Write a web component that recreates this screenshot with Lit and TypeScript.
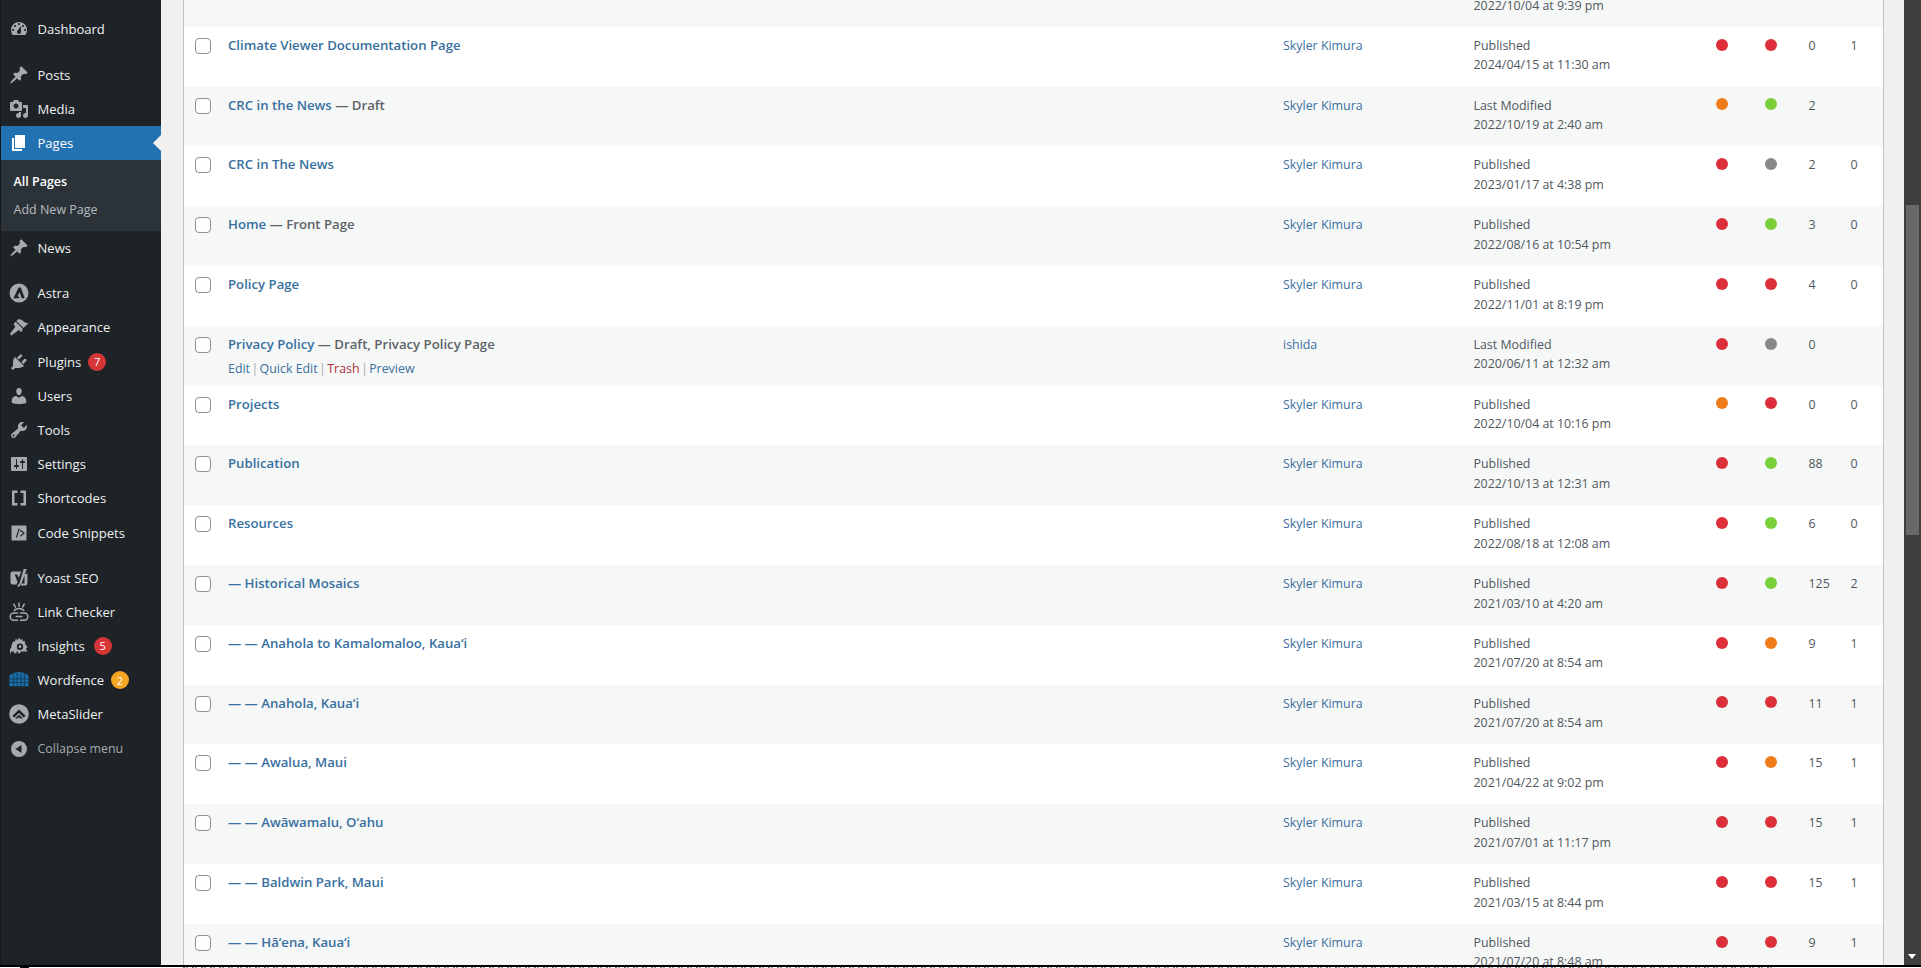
import { LitElement, html, css, svg } from "lit";
import { customElement } from "lit/decorators.js";

type Dot = "r" | "o" | "g" | "x";
interface Row { t: string; s?: string; a?: string; st?: string; d: string; d1?: Dot; d2?: Dot; n1?: string; n2?: string; actions?: boolean; }

const rows: Row[] = [
  { t: "", st: "Published", d: "2022/10/04 at 9:39 pm", a: "" },
  { t: "Climate Viewer Documentation Page", d: "2024/04/15 at 11:30 am", d1: "r", d2: "r", n1: "0", n2: "1" },
  { t: "CRC in the News", s: " — Draft", st: "Last Modified", d: "2022/10/19 at 2:40 am", d1: "o", d2: "g", n1: "2" },
  { t: "CRC in The News", d: "2023/01/17 at 4:38 pm", d1: "r", d2: "x", n1: "2", n2: "0" },
  { t: "Home", s: " — Front Page", d: "2022/08/16 at 10:54 pm", d1: "r", d2: "g", n1: "3", n2: "0" },
  { t: "Policy Page", d: "2022/11/01 at 8:19 pm", d1: "r", d2: "r", n1: "4", n2: "0" },
  { t: "Privacy Policy", s: " — Draft, Privacy Policy Page", a: "ishida", st: "Last Modified", d: "2020/06/11 at 12:32 am", d1: "r", d2: "x", n1: "0", actions: true },
  { t: "Projects", d: "2022/10/04 at 10:16 pm", d1: "o", d2: "r", n1: "0", n2: "0" },
  { t: "Publication", d: "2022/10/13 at 12:31 am", d1: "r", d2: "g", n1: "88", n2: "0" },
  { t: "Resources", d: "2022/08/18 at 12:08 am", d1: "r", d2: "g", n1: "6", n2: "0" },
  { t: "— Historical Mosaics", d: "2021/03/10 at 4:20 am", d1: "r", d2: "g", n1: "125", n2: "2" },
  { t: "— — Anahola to Kamalomaloo, Kaua‘i", d: "2021/07/20 at 8:54 am", d1: "r", d2: "o", n1: "9", n2: "1" },
  { t: "— — Anahola, Kaua‘i", d: "2021/07/20 at 8:54 am", d1: "r", d2: "r", n1: "11", n2: "1" },
  { t: "— — Awalua, Maui", d: "2021/04/22 at 9:02 pm", d1: "r", d2: "o", n1: "15", n2: "1" },
  { t: "— — Awāwamalu, O‘ahu", d: "2021/07/01 at 11:17 pm", d1: "r", d2: "r", n1: "15", n2: "1" },
  { t: "— — Baldwin Park, Maui", d: "2021/03/15 at 8:44 pm", d1: "r", d2: "r", n1: "15", n2: "1" },
  { t: "— — Hā‘ena, Kaua‘i", d: "2021/07/20 at 8:48 am", d1: "r", d2: "r", n1: "9", n2: "1" },
];

const p = (d: string) => svg`<path fill-rule="evenodd" d=${d}></path>`;
const icons: Record<string, unknown> = {
  dashboard: p("M3.76 16h12.48c1.1-1.37 1.76-3.11 1.76-5 0-4.42-3.58-8-8-8s-8 3.58-8 8c0 1.89.66 3.63 1.76 5zM10 4c.55 0 1 .45 1 1s-.45 1-1 1-1-.45-1-1 .45-1 1-1zM6 6c.55 0 1 .45 1 1s-.45 1-1 1-1-.45-1-1 .45-1 1-1zm8 0c.55 0 1 .45 1 1s-.45 1-1 1-1-.45-1-1 .45-1 1-1zm-5.37 5.55L12 7v6c0 1.1-.9 2-2 2s-2-.9-2-2c0-.57.24-1.08.63-1.45zM4 10c.55 0 1 .45 1 1s-.45 1-1 1-1-.45-1-1 .45-1 1-1zm12 0c.55 0 1 .45 1 1s-.45 1-1 1-1-.45-1-1 .45-1 1-1z"),
  pin: p("M10.44 3.02l1.82-1.82 6.36 6.35-1.83 1.82c-1.05-.68-2.48-.57-3.41.36l-.75.75c-.92.93-1.04 2.35-.35 3.41l-1.83 1.82-2.41-2.41-2.8 2.79c-.42.42-3.38 2.71-3.8 2.29s1.86-3.39 2.28-3.81l2.79-2.79L4.1 9.36l1.83-1.82c1.05.69 2.48.57 3.4-.36l.75-.75c.93-.92 1.05-2.35.36-3.41z"),
  media: p("M13 11V4c0-.55-.45-1-1-1h-1.67L9 1H5L3.67 3H2c-.55 0-1 .45-1 1v7c0 .55.45 1 1 1h10c.55 0 1-.45 1-1zM7 4.5c1.38 0 2.5 1.12 2.5 2.5S8.38 9.5 7 9.5 4.5 8.38 4.5 7 5.62 4.5 7 4.5zM14 6h5v10.5c0 1.38-1.12 2.5-2.5 2.5S14 17.88 14 16.5s1.12-2.5 2.5-2.5c.17 0 .34.02.5.05V9h-3V6zm-4 8.05V13h2v3.5c0 1.38-1.12 2.5-2.5 2.5S7 17.88 7 16.5 8.12 14 9.5 14c.17 0 .34.02.5.05z"),
  page: p("M6 15V2h10v13H6zm-1 1h8v2H3V5h2v11z"),
  astra: p("M10 .5a9.5 9.5 0 1 0 0 19 9.5 9.5 0 0 0 0-19zM9.6 4.5h2.2l3.9 10.7h-2.9l-2.1-6-3.4 6H4.4zM8.6 12.2l-1.2 3h3.4z"),
  appearance: p("M14.48 11.06L7.41 3.99l1.5-1.5c.5-.56 2.3-.47 3.51.32 1.21.8 1.43 1.28 2.91 2.1 1.18.64 2.45 1.26 4.45.85zm-.71.71L6.7 4.7 4.93 6.47c-.39.39-.39 1.02 0 1.41l1.06 1.06c.39.39.39 1.03 0 1.42-.6.6-4.4 6.03-5.03 6.66l1.5 1.5c.62-.63 6.06-4.43 6.66-5.03.39-.39 1.03-.39 1.42 0l1.06 1.06c.39.39 1.02.39 1.41 0z"),
  plugins: p("M13.11 4.36L9.87 7.6 8 5.73l3.24-3.24c.35-.34 1.05-.2 1.56.32.52.51.66 1.21.31 1.55zm-8 1.77l.91-1.12 9.01 9.01-1.19.84c-.71.71-2.63 1.16-3.82 1.16H6.14L4.9 17.26c-.59.59-1.54.59-2.12 0-.59-.58-.59-1.53 0-2.12l1.24-1.24v-3.88c0-1.13.4-3.01 1.09-3.89zm7.26 3.97l3.24-3.24c.34-.35 1.04-.21 1.55.31.52.51.66 1.21.31 1.55l-3.24 3.25z"),
  users: p("M10 9.25c-2.27 0-2.73-3.44-2.73-3.44C7 4.02 7.82 2 9.97 2c2.16 0 2.98 2.02 2.71 3.81 0 0-.41 3.44-2.68 3.44zm0 2.57L12.72 10c2.39 0 4.52 2.33 4.52 4.53v2.49s-3.65 1.13-7.24 1.13c-3.65 0-7.24-1.13-7.24-1.13v-2.49c0-2.25 1.94-4.48 4.47-4.48z"),
  tools: p("M16.68 9.77c-1.34 1.34-3.3 1.67-4.95.99l-5.41 6.52c-.99.99-2.59.99-3.58 0s-.99-2.59 0-3.57l6.52-5.42c-.68-1.65-.35-3.61.99-4.95 1.28-1.28 3.12-1.62 4.72-1.06l-2.89 2.89 2.82 2.82 2.86-2.87c.53 1.58.18 3.39-1.08 4.65zM3.81 16.21c.4.39 1.04.39 1.43 0 .4-.4.4-1.04 0-1.43-.39-.4-1.03-.4-1.43 0-.39.39-.39 1.03 0 1.43z"),
  settings: p("M18 16V4c0-.55-.45-1-1-1H3c-.55 0-1 .45-1 1v12c0 .55.45 1 1 1h14c.55 0 1-.45 1-1zM8 11h1c.55 0 1 .45 1 1s-.45 1-1 1H8v1.5c0 .28-.22.5-.5.5s-.5-.22-.5-.5V13H6c-.55 0-1-.45-1-1s.45-1 1-1h1V5.5c0-.28.22-.5.5-.5s.5.22.5.5V11zm5-2h-1c-.55 0-1-.45-1-1s.45-1 1-1h1V5.5c0-.28.22-.5.5-.5s.5.22.5.5V7h1c.55 0 1 .45 1 1s-.45 1-1 1h-1v5.5c0 .28-.22.5-.5.5s-.5-.22-.5-.5V9z"),
  shortcodes: p("M3 2.5h5.5V5H5.5v10h3v2.5H3zM17 2.5h-5.5V5h3v10h-3v2.5H17z"),
  snippets: p("M3.5 2.5h13a1 1 0 0 1 1 1v13a1 1 0 0 1-1 1h-13a1 1 0 0 1-1-1v-13a1 1 0 0 1 1-1zM9.6 5.5l-2.7 9h1.2l2.7-9zM11.3 6.6v1.6l3 2-3 2v1.6l4.6-3.6z"),
  yoast: p("M3.5 3.5h8.7L9.8 9.9 8.3 6.5H5.7l2.9 7.2-1 2.8H3.5a2 2 0 0 1-2-2V5.5a2 2 0 0 1 2-2zM14.7 1h3l-5.1 14.2c-.8 2.2-2 3.3-4 3.8v-2c1-.3 1.6-1 2-2.2l.2-.5zM15.5 6.2l2.9-.6v9.9a2 2 0 0 1-2 2H11l.8-2.1h3.7z"),
  insights: p("M3 8l1.6-3.2.9 1.4L7 2.6l1.3 1.9L10 1.5l1.6 2.6 1.7-1.4.5 2.5 2.3-.2-.2 2.6 2.6 3.4-1.6 2 1.6 2.4H2.3l-.9 3.2-.6-5.4L2 12zM11 7.5a3.2 3.2 0 1 0 0 6.4 3.2 3.2 0 0 0 0-6.4zM11 9.3a1.4 1.4 0 1 1 0 2.8 1.4 1.4 0 0 1 0-2.8zM5 15.5v1.8h2.4v-1.8zM9 15.5v1.8h2.4v-1.8z"),
  meta: p("M10 .2a9.8 9.8 0 1 0 0 19.6 9.8 9.8 0 0 0 0-19.6zM10 5.4l6.6 6.4-1.9 1.8-4.7-4.5-4.7 4.5-1.9-1.8zM10 10.8l4 3.8h-2.5L10 13.2l-1.5 1.4H6z"),
  collapse: p("M10 2a8 8 0 1 0 0 16 8 8 0 0 0 0-16zM12.5 6v8l-6-4z"),
};

const linkIcon = svg`<g fill="none" stroke="#a7aaad" stroke-width="1.5" stroke-linecap="round">
  <path d="M10 1v3.5M4.8 2.2l1.6 3M15.2 2.2l-1.6 3"></path>
  <path d="M8.5 11H4.8a3.6 3.6 0 0 0 0 7.2h3.7M11.5 11h3.7a3.6 3.6 0 0 1 0 7.2h-3.7"></path>
  <path d="M5.2 8.5c1-1.2 2.6-1.9 4.8-1.9s3.8.7 4.8 1.9M7.2 14.6h5.6"></path>
</g>`;
const fenceIcon = svg`<path fill="#1d6ca5" d="M.5 5.5C3 3.5 6.5 2 10 1.8c3.5.2 7 1.7 9.5 3.7v10.8H.5z"></path>
<path fill="none" stroke="#10405f" stroke-width="1" d="M.5 9h19M.5 12.5h19M4.5 3.8v12.5M8 2.5v13.8M12 2.5v13.8M15.5 3.8v12.5"></path>`;

interface Item { k: string; label: string; badge?: string; badgeCls?: string; gap?: string; cur?: boolean; cls?: string; }
const menu: Item[] = [
  { k: "dashboard", label: "Dashboard" },
  { k: "pin", label: "Posts", gap: "gap first" },
  { k: "media", label: "Media" },
  { k: "page", label: "Pages", cur: true },
  { k: "pin", label: "News" },
  { k: "astra", label: "Astra", gap: "gap" },
  { k: "appearance", label: "Appearance" },
  { k: "plugins", label: "Plugins", badge: "7" },
  { k: "users", label: "Users" },
  { k: "tools", label: "Tools" },
  { k: "settings", label: "Settings" },
  { k: "shortcodes", label: "Shortcodes" },
  { k: "snippets", label: "Code Snippets" },
  { k: "yoast", label: "Yoast SEO", gap: "gap" },
  { k: "link", label: "Link Checker" },
  { k: "insights", label: "Insights", badge: "5", badgeCls: "ins" },
  { k: "fence", label: "Wordfence", badge: "2", badgeCls: "warn" },
  { k: "meta", label: "MetaSlider" },
  { k: "collapse", label: "Collapse menu", cls: "muted" },
];

@customElement("app-root")
export class AppRoot extends LitElement {
  static styles = css`
    :host { display: block; width: 1921px; height: 968px; overflow: hidden; background: #fff;
      font-family: "Open Sans", "Noto Sans", sans-serif; font-size: 12.4px; color: #50575e; }
    * { box-sizing: border-box; }
    .page { display: grid; grid-template-columns: 161px 1fr 17px; height: 965px; overflow: hidden; }

    .side { background: #1d2327; border-left: 1px solid #15191c; padding-top: 12px; height: 965px; font-size: 13.05px; }
    .item { position: relative; display: flex; align-items: center; height: 34.2px; color: #f0f0f1; white-space: nowrap; }
    .item.gap { margin-top: 10.9px; }
    .item.gap.first { margin-top: 11.3px; }
    .item svg { width: 20px; height: 20px; margin-left: 8px; margin-right: 8.5px; flex: none; fill: #a7aaad; }
    .item.cur { background: #2271b1; color: #fff; }
    .item.cur svg { fill: #fff; }
    .item.cur::after { content: ""; position: absolute; right: 0; top: 50%; margin-top: -8px;
      border: 8px solid transparent; border-right-color: #f0f0f1; border-left-width: 0; }
    .item.muted { color: #a7aaad; font-size: 12.4px; }
    .badge { display: inline-flex; align-items: center; justify-content: center; width: 18px; height: 18px;
      margin-left: 7px; border-radius: 50%; background: #d63638; color: #fff; font-size: 11px; }
    .badge.ins { margin-left: 9px; }
    .badge.warn { background: #f5a623; }
    .sub { background: #2c3338; height: 71px; padding: 7px 0 0 12.5px; font-size: 12.5px; }
    .sub div { height: 28px; display: flex; align-items: center; color: rgba(240, 246, 252, 0.7); }
    .sub .on { color: #fff; font-weight: 600; }

    .main { background: #f0f0f1; padding: 0 20px 0 22px; overflow: hidden; min-width: 0; }
    .table { border-left: 1px solid #c3c4c7; border-right: 1px solid #c3c4c7; height: 965px; overflow: hidden; background: #fff; }
    .rows { margin-top: -33px; }
    .row { display: grid; height: 59.8px; padding-top: 9.1px; line-height: 19.5px;
      grid-template-columns: 44px 1055px 190.5px 225px 47px 51px 42px 1fr; align-items: start; background: #fff; }
    .row.alt { background: #f6f7f7; }
    .cb { appearance: none; display: block; width: 16px; height: 16px; margin: 1.9px 0 0 11px; padding: 0;
      background: #fff; border: 1px solid #8c8f94; border-radius: 4px; }
    a { color: #3a6f9f; text-decoration: none; }
    .title { font-weight: 600; font-size: 13.2px; }
    a.title { color: #38709f; }
    .state { color: #5c6369; }
    .actions { margin-top: 4.5px; color: #a7aaad; display: flex; }
    .actions i { font-style: normal; margin: 0 1.4px; }
    .actions .del { color: #a8323a; }
    .dot { display: block; width: 12px; height: 12px; border-radius: 50%; margin: 2.8px auto 0; }
    .dot.r { background: #dc2f3a; }
    .dot.o { background: #ee7c1b; }
    .dot.g { background: #7ad03a; }
    .dot.x { background: #888; }
    .num { padding-left: 12px; }

    .bar { background: #3e3e3e; position: relative; height: 965px; }
    .thumb { margin: 205px 2px 0; height: 330px; background: #686868; }
    .arrow { position: absolute; left: 4px; top: 954px; border: 4px solid transparent; border-top: 5px solid #fff; border-bottom-width: 0; }
    .strip { height: 3px; background: #fff; border-top: 2px solid #000; display: flex; }
    .strip i { display: block; height: 1px; }
    .strip .blob { width: 9px; margin-left: 20px; background: #000; }
    .strip .noise { width: 1590px; margin-left: 154px;
      background: repeating-linear-gradient(90deg, #777 0 2px, #fff 2px 3px, #999 3px 5px, #fff 5px 9px); }
  `;

  private icon(k: string) {
    if (k === "link") return html`<svg viewBox="0 0 20 20">${linkIcon}</svg>`;
    if (k === "fence") return html`<svg viewBox="0 0 20 20">${fenceIcon}</svg>`;
    return html`<svg viewBox="0 0 20 20">${icons[k]}</svg>`;
  }

  private row(r: Row, i: number) {
    return html`<div class="row ${i % 2 === 0 ? "alt" : ""}">
      <div>${r.t ? html`<input class="cb" type="checkbox" />` : ""}</div>
      <div>
        ${r.t ? html`<a class="title">${r.t}</a>` : ""}${r.s ? html`<span class="title state">${r.s}</span>` : ""}
        ${r.actions
          ? html`<div class="actions"><a>Edit</a><i>|</i><a>Quick Edit</a><i>|</i><a class="del">Trash</a><i>|</i><a>Preview</a></div>`
          : ""}
      </div>
      <div><a>${r.a ?? "Skyler Kimura"}</a></div>
      <div>${r.st ?? "Published"}<br />${r.d}</div>
      <div>${r.d1 ? html`<span class="dot ${r.d1}"></span>` : ""}</div>
      <div>${r.d2 ? html`<span class="dot ${r.d2}"></span>` : ""}</div>
      <div class="num">${r.n1 ?? ""}</div>
      <div class="num">${r.n2 ?? ""}</div>
    </div>`;
  }

  render() {
    return html`
      <div class="page">
        <nav class="side">
          ${menu.map(
            (m) => html`
              <div class="item ${m.gap ?? ""} ${m.cur ? "cur" : ""} ${m.cls ?? ""}">
                ${this.icon(m.k)}<span>${m.label}</span>
                ${m.badge ? html`<span class="badge ${m.badgeCls ?? ""}">${m.badge}</span>` : ""}
              </div>
              ${m.cur ? html`<div class="sub"><div class="on">All Pages</div><div>Add New Page</div></div>` : ""}
            `
          )}
        </nav>
        <main class="main">
          <div class="table"><div class="rows">${rows.map((r, i) => this.row(r, i))}</div></div>
        </main>
        <div class="bar"><div class="thumb"></div><div class="arrow"></div></div>
      </div>
      <div class="strip"><i class="blob"></i><i class="noise"></i></div>
    `;
  }
}
